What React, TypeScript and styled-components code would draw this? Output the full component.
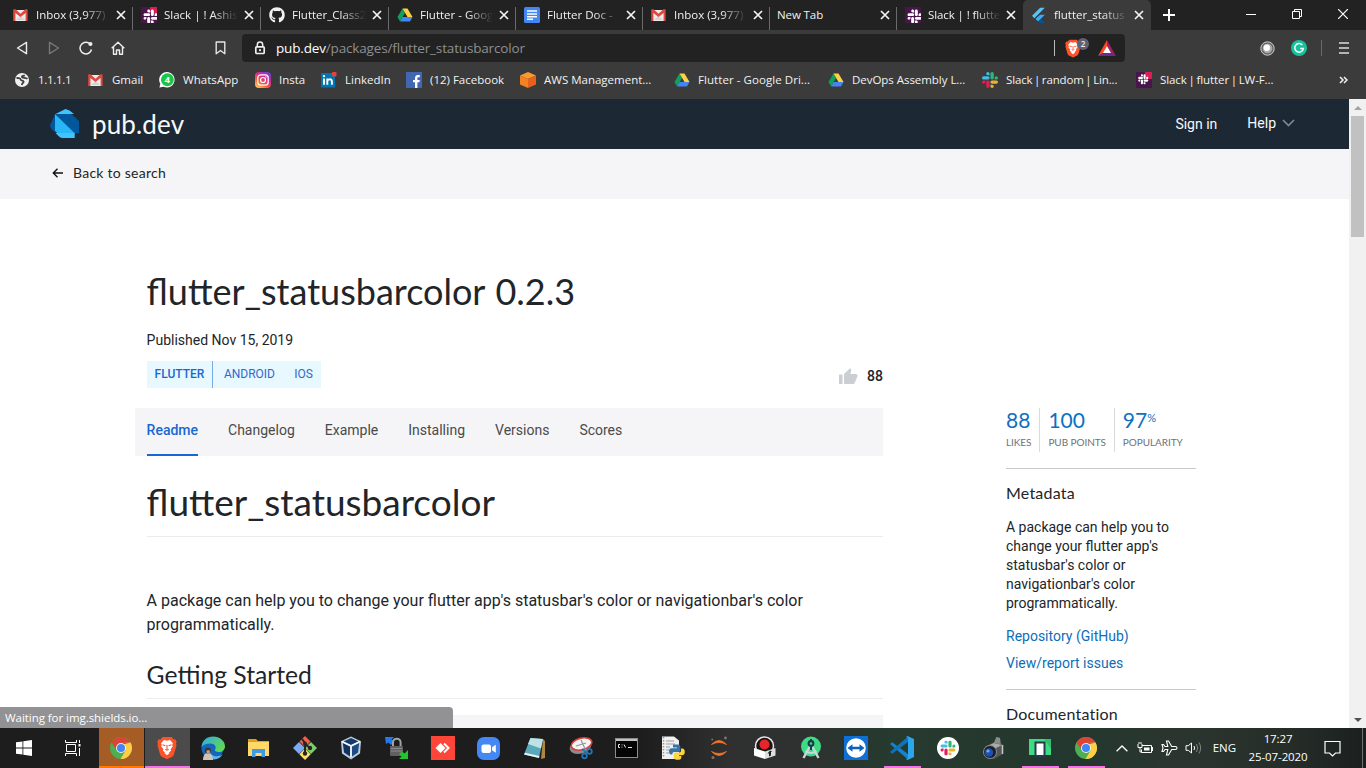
import React from 'react';
import styled, { createGlobalStyle } from 'styled-components';
import { FaGithub, FaSlack } from 'react-icons/fa';

const UI = "'Open Sans', 'Noto Sans', sans-serif";
const DISPLAY = "Lato, 'Open Sans', sans-serif";
const BODY = "Roboto, 'Liberation Sans', sans-serif";

const GlobalStyle = createGlobalStyle`
  * { box-sizing: border-box; }
  body { margin: 0; background: #fff; overflow: hidden; }
  svg { display: block; flex: none; }
`;

const Screen = styled.div`
  width: 1366px;
  height: 768px;
  display: flex;
  flex-direction: column;
  overflow: hidden;
  font-family: ${UI};
`;

/* ---------- browser frame ---------- */

const Browser = styled.header`
  height: 99px;
  flex: none;
  background: #3b3b3b;
  color: #f2f2f2;
  display: flex;
  flex-direction: column;
`;

const TabStrip = styled.div`
  height: 30px;
  background: #222;
  display: flex;
  padding-left: 5px;
`;

const TabItem = styled.div<{ $width?: number; $active?: boolean; $last?: boolean }>`
  width: ${p => p.$width ?? 127}px;
  height: 30px;
  flex: none;
  display: flex;
  align-items: center;
  padding: 0 7px 0 8px;
  border-radius: ${p => (p.$active ? '5px 5px 0 0' : '0')};
  background: ${p =>
    p.$active
      ? '#3b3b3b'
      : p.$last
        ? 'transparent'
        : 'linear-gradient(#6a6a6a, #6a6a6a) right bottom / 1px 23px no-repeat'};
`;

const TabIcon = styled.span`
  width: 16px;
  margin-right: 7px;
`;

const TabTitle = styled.span`
  flex: 1;
  height: 20px;
  line-height: 20px;
  font-size: 11.5px;
  white-space: nowrap;
  overflow: hidden;
  mask-image: linear-gradient(to right, #000 calc(100% - 26px), transparent);
`;

const SnugTabTitle = styled(TabTitle)`
  letter-spacing: -0.1px;
  margin-right: -1px;
`;

const PlainTabTitle = styled(TabTitle)`
  mask-image: none;
  margin-left: -1px;
  letter-spacing: -0.1px;
`;

const CloseSlot = styled.span`
  width: 10px;
  margin-left: 6px;
`;

const NewTabSlot = styled.div`
  width: 36px;
  display: grid;
  place-items: center;
`;

const WindowButtons = styled.div`
  display: flex;
  margin-left: auto;
`;

const WindowButton = styled.div`
  width: 46px;
  height: 28px;
  display: grid;
  place-items: center;
`;

const Toolbar = styled.div`
  height: 36px;
  display: flex;
  align-items: center;
  padding: 0 6px;
`;

const ToolButton = styled.div`
  width: 32px;
  height: 32px;
  flex: none;
  display: grid;
  place-items: center;
`;

const BookmarkButton = styled(ToolButton)`
  margin-left: 70px;
`;

const AddressBar = styled.div`
  width: 883px;
  height: 28px;
  flex: none;
  margin-left: 6px;
  border-radius: 4px;
  background: #222;
  display: flex;
  align-items: center;
  padding: 0 9px 0 12px;
`;

const Url = styled.div`
  flex: 1;
  padding-left: 10px;
  font-size: 13.5px;
  line-height: 20px;
  letter-spacing: -0.16px;
  color: #8f8f8f;
`;

const UrlHost = styled.span`
  color: #fff;
`;

const Separator = styled.span<{ $color: string }>`
  width: 1px;
  height: 16px;
  background: ${p => p.$color};
`;

const ShieldButton = styled.div`
  position: relative;
  margin-left: 10px;
  width: 17px;
`;

const ShieldCount = styled.span`
  position: absolute;
  left: 12px;
  top: -1px;
  width: 12px;
  height: 12px;
  border-radius: 6px;
  background: #5f6072;
  color: #eee;
  font-size: 8px;
  font-weight: 600;
  line-height: 12px;
  text-align: center;
`;

const RewardsSlot = styled.span`
  margin-left: 16px;
`;

const ExtensionRow = styled.div`
  display: flex;
  align-items: center;
  margin-left: 126px;
`;

const MenuGroup = styled.div`
  display: flex;
  align-items: center;
  gap: 17px;
  margin-left: 6px;
`;

const BookmarkBar = styled.nav`
  height: 28px;
  display: flex;
  align-items: center;
  padding-left: 14px;
`;

const BookmarkItem = styled.div<{ $width: number; $word?: number; $track?: number }>`
  width: ${p => p.$width}px;
  flex: none;
  display: flex;
  align-items: center;
  gap: 8px;
  font-size: 11.5px;
  line-height: 20px;
  white-space: nowrap;
  word-spacing: ${p => p.$word ?? 0}px;
  letter-spacing: ${p => p.$track ?? 0}px;
`;

const Overflow = styled.div`
  margin-left: auto;
  padding-right: 18px;
`;

/* ---------- web page ---------- */

const Viewport = styled.div`
  flex: 1;
  min-height: 0;
  display: flex;
  position: relative;
`;

const Site = styled.div`
  flex: 1;
  height: 629px;
  overflow: hidden;
  background: #fff;
  color: #212529;
  font-family: ${BODY};
`;

const SiteHeader = styled.div`
  height: 50px;
  background: #1c2834;
  color: #f8f9fa;
  display: flex;
  align-items: center;
  padding: 0 54px 0 50px;
  font-size: 14px;
`;

const Brand = styled.span`
  flex: 1;
  margin-left: 12px;
  font-family: ${DISPLAY};
  font-size: 26px;
  line-height: 32px;
  letter-spacing: 0.15px;
`;

const HelpLink = styled.span`
  display: flex;
  align-items: center;
  gap: 6px;
  margin: -2px 0 0 30px;
`;

const BackBar = styled.div`
  height: 50px;
  background: #f5f5f7;
  display: flex;
  align-items: center;
  gap: 9px;
  padding: 0 0 3px 52px;
  font-family: ${DISPLAY};
  font-size: 14px;
  letter-spacing: 0.25px;
`;

const Main = styled.main`
  display: flex;
  align-items: flex-start;
  padding: 69px 0 0 135px;
`;

const Content = styled.article`
  width: 748px;
`;

const PackageHead = styled.div`
  padding-left: 11.6px;
`;

const Title = styled.h1`
  margin: 0;
  padding-top: 1px;
  height: 44px;
  font-family: ${DISPLAY};
  font-weight: 400;
  font-size: 36px;
  line-height: 44px;
  word-spacing: 1.5px;
`;

const Published = styled.div`
  margin-top: 18px;
  font-size: 14px;
  line-height: 20px;
`;

const HeadRow = styled.div`
  display: flex;
  justify-content: space-between;
  align-items: flex-start;
  height: 58px;
  padding-top: 11px;
`;

const Tags = styled.div`
  display: flex;
  height: 27px;
  background: #e7f8ff;
  color: #3169c9;
  font-size: 12px;
  line-height: 26px;
`;

const TagMain = styled.span`
  width: 66px;
  padding-left: 8px;
  color: #1967d2;
  font-weight: 500;
  border-right: 1px solid #7ba9e6;
`;

const Tag = styled.span`
  padding: 0 8px 0 11.3px;
`;

const Likes = styled.div`
  display: flex;
  align-items: center;
  gap: 9px;
  padding-top: 5px;
  font-size: 14px;
  font-weight: 500;
  line-height: 21px;
`;

const PackageTabs = styled.div`
  height: 48px;
  background: #f5f5f7;
  display: flex;
  gap: 30px;
  padding-left: 11.6px;
`;

const PackageTab = styled.span<{ $active?: boolean }>`
  height: 48px;
  line-height: 44px;
  font-size: 14px;
  font-weight: ${p => (p.$active ? 500 : 400)};
  color: ${p => (p.$active ? '#1967d2' : '#4a4a4a')};
  border-bottom: 2px solid ${p => (p.$active ? '#1967d2' : 'transparent')};
`;

const Readme = styled.section`
  padding-left: 11.6px;
`;

const ReadmeTitle = styled.h1`
  margin: 0;
  height: 81px;
  padding-top: 23px;
  border-bottom: 1px solid #eaecef;
  font-family: ${DISPLAY};
  font-weight: 400;
  font-size: 37px;
  line-height: 46px;
`;

const Paragraph = styled.p`
  margin: 52px 0 0;
  font-size: 16px;
  line-height: 24px;
`;

const ReadmeSubtitle = styled.h2`
  margin: 23px 0 0;
  height: 39px;
  border-bottom: 1px solid #eaecef;
  font-family: ${DISPLAY};
  font-weight: 400;
  font-size: 24.7px;
  line-height: 30px;
`;

const CodeBlock = styled.pre`
  margin: 16px 0 0;
  height: 60px;
  background: #f5f5f7;
`;

const Sidebar = styled.aside`
  width: 190px;
  margin: 140px 0 0 123px;
  font-size: 14px;
  line-height: 19px;
`;

const Scores = styled.div`
  display: flex;
  height: 44px;
`;

const Score = styled.div`
  height: 44px;
  padding-right: 8px;
  margin-right: 8px;
  border-right: 1px solid #d8dadd;
  font-family: ${DISPLAY};
  white-space: nowrap;
  &:last-child {
    border: 0;
    margin: 0;
  }
`;

const ScoreValue = styled.div`
  display: flex;
  height: 26px;
  font-size: 21px;
  line-height: 24px;
  color: #0e70c0;
`;

const ScorePercent = styled.span`
  font-size: 11px;
  line-height: 20px;
`;

const ScoreLabel = styled.div`
  font-size: 10px;
  line-height: 17px;
  letter-spacing: -0.07px;
  color: #6d7278;
`;

const Divider = styled.div`
  height: 1px;
  margin-top: 16px;
  background: #c8c8ca;
`;

const SideTitle = styled.h3`
  margin: 0;
  padding-top: 14px;
  height: 35px;
  font-family: ${DISPLAY};
  font-weight: 400;
  font-size: 16px;
  line-height: 20px;
  letter-spacing: 0.2px;
`;

const SideText = styled.p`
  margin: 14px 0 0;
  width: 170px;
`;

const SideLink = styled.a`
  display: block;
  color: #0e6db8;
  margin-top: 8px;
  ${SideText} + & {
    margin-top: 14px;
  }
`;

const Scrollbar = styled.div`
  width: 17px;
  background: #f1f1f1;
  display: flex;
  flex-direction: column;
  align-items: center;
`;

const ScrollArrow = styled.div`
  height: 17px;
  width: 17px;
  display: grid;
  place-items: center;
`;

const ScrollThumb = styled.div`
  width: 13px;
  height: 121px;
  background: #c1c1c1;
  margin-bottom: auto;
`;

const StatusBubble = styled.div`
  position: absolute;
  left: 0;
  bottom: 0;
  width: 453px;
  height: 21px;
  padding-left: 5px;
  border-top-right-radius: 4px;
  background: #929294;
  color: #fff;
  font-size: 11.5px;
  line-height: 21px;
  letter-spacing: -0.05px;
`;

/* ---------- taskbar ---------- */

const Taskbar = styled.footer`
  height: 40px;
  flex: none;
  display: flex;
  color: #fff;
  background: linear-gradient(to right, #1d1d1d 0, #1d1d1d 640px, #303030 730px, #2f3030 800px, #263a2f 890px, #24372e 1090px, #2b352f 1180px, #262d29 1290px, #1b201e 1366px);
`;

const TaskButton = styled.div<{ $width?: number; $fill?: string; $line?: string }>`
  width: ${p => p.$width ?? 45.95}px;
  height: 40px;
  flex: none;
  display: grid;
  place-items: center;
  border-right: 1px solid transparent;
  background: ${p => p.$fill ?? 'transparent'};
  background-clip: padding-box;
  box-shadow: ${p => (p.$fill && p.$line ? `inset 0 -2px ${p.$line}` : 'none')};
`;

const RunningButton = styled(TaskButton)`
  background: linear-gradient(#f472e4, #f472e4) center bottom / 37px 2px no-repeat;
`;

const Tray = styled.div`
  flex: 1;
  display: flex;
  align-items: center;
  font-size: 11.5px;
`;

const TrayIcon = styled.span`
  width: 24px;
  display: grid;
  place-items: center;
`;

const Language = styled.span`
  margin-left: 7px;
  line-height: 16px;
  padding-bottom: 1px;
`;

const Clock = styled.div`
  width: 62px;
  margin-left: 11px;
  text-align: center;
  line-height: 18px;
  letter-spacing: -0.1px;
  padding-bottom: 1px;
`;

const NoticeSlot = styled.span`
  margin-left: 15px;
`;

const DesktopEdge = styled.span`
  margin-left: 20px;
  width: 1px;
  height: 40px;
  background: #6f7472;
`;

/* ---------- small drawings ---------- */

const Close = () => (
  <svg width="10" height="10" viewBox="0 0 10 10"><path d="M1 1l8 8M9 1l-8 8" stroke="#f4f4f4" strokeWidth="1.7" /></svg>
);

const GmailIcon = () => (
  <svg width="16" height="16" viewBox="0 0 16 16">
    <path d="M1 3h13v11H1z" fill="#eceaea" />
    <path d="M3 13l4.5-4L12 13" fill="#d4d2d2" />
    <path d="M.8 2.300h1.700l5 4.400 5-4.400H14c.4 0 .6.4.6.8V14h-2V6L7.500 10 2.400 6v8H.2V3c0-.4.2-.7.6-.7z" fill="#dc4a3f" />
  </svg>
);

const SlackDark = ({ alert }: { alert?: boolean }) => (
  <svg width="16" height="16" viewBox="0 0 16 16">
    <path d="M0 0h16v16H0z" fill="#4a154b" />
    {alert && <path d="M9 0h7v7h-4.500L9 4.500z" fill="#d91d57" />}
    <FaSlack x="1.5" y="1.5" width="13" height="13" color="#fff" />
  </svg>
);

const SlackColor = () => (
  <svg width="16" height="16" viewBox="0 0 24 24">
    <path fill="#e01e5a" d="M5.042 15.165a2.528 2.528 0 0 1-2.520 2.523A2.528 2.528 0 0 1 0 15.165a2.527 2.527 0 0 1 2.522-2.520h2.520v2.520zM6.313 15.165a2.527 2.527 0 0 1 2.521-2.520 2.527 2.527 0 0 1 2.521 2.520v6.313A2.528 2.528 0 0 1 8.834 24a2.528 2.528 0 0 1-2.521-2.522v-6.313z" />
    <path fill="#3fbfe8" d="M8.834 5.042a2.528 2.528 0 0 1-2.521-2.520A2.528 2.528 0 0 1 8.834 0a2.528 2.528 0 0 1 2.521 2.522v2.520H8.834zM8.834 6.313a2.528 2.528 0 0 1 2.521 2.521 2.528 2.528 0 0 1-2.521 2.521H2.522A2.528 2.528 0 0 1 0 8.834a2.528 2.528 0 0 1 2.522-2.521h6.312z" />
    <path fill="#2fb67c" d="M18.956 8.834a2.528 2.528 0 0 1 2.522-2.521A2.528 2.528 0 0 1 24 8.834a2.528 2.528 0 0 1-2.522 2.521h-2.522V8.834zM17.688 8.834a2.528 2.528 0 0 1-2.523 2.521 2.527 2.527 0 0 1-2.520-2.521V2.522A2.527 2.527 0 0 1 15.165 0a2.528 2.528 0 0 1 2.523 2.522v6.312z" />
    <path fill="#ecb22e" d="M15.165 18.956a2.528 2.528 0 0 1 2.523 2.522A2.528 2.528 0 0 1 15.165 24a2.527 2.527 0 0 1-2.520-2.522v-2.522h2.520zM15.165 17.688a2.527 2.527 0 0 1-2.520-2.523 2.526 2.526 0 0 1 2.520-2.520h6.313A2.527 2.527 0 0 1 24 15.165a2.528 2.528 0 0 1-2.522 2.523h-6.313z" />
  </svg>
);

const DriveIcon = () => (
  <svg width="16" height="16" viewBox="0 0 16 16">
    <path d="M5.500 1.500L8 6 3.100 14.500 .5 10z" fill="#11a05c" />
    <path d="M5.500 1.500h5l5 8.500h-5z" fill="#ffcf44" />
    <path d="M5.600 10h9.900L13 14.500H3.100z" fill="#4485f4" />
  </svg>
);

const DocsIcon = () => (
  <svg width="16" height="16" viewBox="0 0 16 16">
    <rect width="16" height="16" rx="1.5" fill="#4387f5" />
    <path d="M3 4h10M3 7h10M3 9.800h10M3 12.300h6" stroke="#fff" strokeWidth="1.6" />
  </svg>
);

const FlutterIcon = () => (
  <svg width="15" height="17" viewBox="0 0 15 17">
    <path d="M9.200.8h4.600L3.400 11.200 1 8.800z" fill="#54c5f8" />
    <path d="M9.200 7.800h4.600l-4.100 4.100L7.300 14.200 4.700 12z" fill="#42a5f5" />
    <path d="M4.800 12l2.400-2.400 2.400 2.400-2.400 2.300z" fill="#29b6f6" />
    <path d="M7.200 14.300l2.400-2.400 4.200 4.200H9.200z" fill="#01579b" />
  </svg>
);

const GlobeIcon = () => (
  <svg width="16" height="16" viewBox="0 0 16 16">
    <circle cx="8" cy="8" r="7" fill="#f0f0f0" />
    <path d="M2.500 6.200c2-.6 4 .2 4.200 1.400.3 1.400 2.900.6 3 2.200 0 1-1.500 1.300-2 3.200M10.800 3.200c-1.300 1-2.800.2-2.900 1.500-.1 1.500 3.800.8 5.600 2.100" fill="none" stroke="#3b3b3b" strokeWidth="1.8" />
  </svg>
);

const WhatsAppIcon = () => (
  <svg width="16" height="16" viewBox="0 0 16.600 16">
    <path d="M.4 15.800l1-3.800A8 8 0 1 1 4.800 15z" fill="#fff" />
    <circle cx="8.700" cy="7.800" r="6.700" fill="#18c64a" />
    <text x="8.700" y="11.600" fontSize="10" fontWeight="700" textAnchor="middle" fill="#fff">4</text>
  </svg>
);

const InstaIcon = () => (
  <svg width="16" height="16" viewBox="0 0 16 16">
    <defs>
      <linearGradient id="insta" x1="0.1" y1="1" x2="0.8" y2="0">
        <stop offset="0" stopColor="#ffd65c" /><stop offset=".35" stopColor="#f7603a" /><stop offset=".65" stopColor="#d52c8c" /><stop offset="1" stopColor="#6a45d5" />
      </linearGradient>
    </defs>
    <rect width="16" height="16" rx="4" fill="url(#insta)" />
    <g fill="none" stroke="#fff" strokeWidth="1.2"><rect x="2.800" y="2.800" width="10.400" height="10.400" rx="3" /><circle cx="8" cy="8" r="2.500" /></g>
    <circle cx="11" cy="5" r=".7" fill="#fff" />
  </svg>
);

const LinkedInIcon = () => (
  <svg width="16" height="16" viewBox="0 0 16 16">
    <rect y="1" width="14" height="14.500" fill="#0077b5" />
    <path d="M3 6.500v6.300M6.300 6.500v6.300M6.300 9.500c0-2.600 4.600-3.200 4.600 0v3.300" fill="none" stroke="#fff" strokeWidth="1.9" />
    <circle cx="3" cy="4.200" r="1.100" fill="#fff" />
    <rect x="11" width="4.500" height="4.500" rx="1" fill="#ea4335" />
  </svg>
);

const FacebookIcon = () => (
  <svg width="16" height="16" viewBox="0 0 16 16">
    <rect width="16" height="16" fill="#4267b2" />
    <path d="M9 16v-5.800H7V8h2V6.200C9 4 10.300 3 12 3h1.800v2.200h-1.300c-.9 0-1.100.5-1.100 1.200V8h2.400l-.4 2.200h-2V16z" fill="#fff" />
  </svg>
);

const AwsIcon = () => (
  <svg width="16" height="16" viewBox="0 0 16 16">
    <path d="M8 0l8 3.600L8 7 0 3.600z" fill="#fa9a2f" />
    <path d="M0 3.600L8 7v9l-8-3.400z" fill="#f58220" />
    <path d="M16 3.600L8 7v9l8-3.400z" fill="#e8611c" />
  </svg>
);

const BraveLion = ({ width, height }: { width: number; height: number }) => (
  <svg width={width} height={height} viewBox="0 0 20 23">
    <path d="M5.400.6h9.200l2 2.300 1.700-.2 1.400 2.500-.7 2 .5 1.900-2.600 9c-.3 1-1 1.700-1.700 2.200L10 22.800l-5.200-2.500c-.8-.5-1.400-1.300-1.700-2.200l-2.600-9L1 7.200.3 5.200l1.400-2.500 1.700.2z" fill="#fb542b" />
    <path d="M10 4.200l3-.7 2.900 3.300-.7 1.800.5 1.400-2 2.500.3 1.700-2 1.700-2 1.400-2-1.400-2-1.700.3-1.700-2-2.500.5-1.400-.7-1.800L7 3.500z" fill="#fff" />
    <path d="M5.500 8.300l3 .9M14.500 8.300l-3 .9M10 8.500v4M8.300 12.700l1.700.9 1.700-.9" fill="none" stroke="#fb542b" strokeWidth="1.1" />
    <path d="M7.300 16.500L10 15.200l2.700 1.300L10 18.700z" fill="#fff" />
  </svg>
);

const RewardsIcon = () => (
  <svg width="18" height="16" viewBox="0 0 18 16">
    <path d="M9 0L0 16l5.500-3L9 7z" fill="#ff4724" />
    <path d="M9 0l9 16-5.500-3L9 7z" fill="#9e1f63" />
    <path d="M0 16h18l-5.500-3.400h-7z" fill="#662d91" />
    <path d="M9 6l4 7H5z" fill="#fff" />
  </svg>
);

const DartIcon = () => (
  <svg width="30" height="30" viewBox="0 0 30 30">
    <path d="M5.500 5L15.500 0l4 1.500L24 5z" fill="#40c4ff" />
    <path d="M5 5h16.500l7.500 7v12h-5z" fill="#01579b" />
    <path d="M5 5L0 16.500c0 1.500 1 3 2 4l3 3z" fill="#01579b" />
    <path d="M5 5l19.500 19v5H12.500L5 22z" fill="#29b6f6" />
    <path d="M5.500 24h19v5H12.500c-1.500 0-3-1-4-2z" fill="#40c4ff" />
  </svg>
);

const Thumb = () => (
  <svg width="19" height="17" viewBox="0 0 19 17">
    <path d="M0 6.500h3.500V16H0z M5 15V6.800c0-.5.200-.9.500-1.200L11 .2l.9.9c.3.300.4.700.3 1.100L11.400 6h5.500c1 0 1.600.8 1.600 1.600 0 .3 0 .5-.1.800l-2.600 6.300c-.3.800-1 1.300-1.800 1.300H6.500C5.700 16 5 15.600 5 15z" fill="#cbced3" />
  </svg>
);

const ChromeIcon = () => (
  <svg width="24" height="24" viewBox="0 0 24 24">
    <circle cx="12" cy="12" r="11" fill="#4caf50" />
    <path d="M2.500 6.500A11 11 0 0 1 21.500 6.500L12 7 8 14.500z" fill="#db4437" />
    <path d="M21.500 6.500A11 11 0 0 1 11.500 23l5-8.500L12 7z" fill="#ffce44" />
    <path d="M21.500 6.500H12V9z" fill="#db4437" />
    <circle cx="12" cy="12" r="5" fill="#f1f1f1" /><circle cx="12" cy="12" r="4" fill="#4285f4" />
  </svg>
);

const EdgeIcon = () => (
  <svg width="24" height="24" viewBox="0 0 24 24">
    <defs>
      <linearGradient id="edgeTop" x1="0" y1="0" x2="1" y2=".5"><stop offset="0" stopColor="#2ea8e6" /><stop offset="1" stopColor="#5fd75b" /></linearGradient>
    </defs>
    <circle cx="11.500" cy="12" r="11" fill="#1565b8" />
    <path d="M.5 11C1 4.500 6 .5 12 .5 19 .5 24 5 24 10.500c0 3.500-3 5.500-6 5.500-3 0-4.500-1.200-4-2.200 2-3-.5-6.300-4.500-6.300C5 7.500 2 9 .5 11z" fill="url(#edgeTop)" />
    <path d="M9 12.500c-1.500 5 3 8.500 8 7.500 2 0 3.500-1 4.500-2-2 5-8.500 7-13.500 4z" fill="#59b6ee" />
    <path d="M2 24c0-4.500 2-7 4.700-7S12 19.500 12 24z" fill="#cfc3b6" />
    <circle cx="6.800" cy="14.500" r="3" fill="#3d3531" /><circle cx="7.200" cy="15.800" r="1.800" fill="#c59c83" />
  </svg>
);

const FolderIcon = () => (
  <svg width="24" height="22" viewBox="0 0 24 22">
    <path d="M1 2h8l2 2h11v5H1z" fill="#e0a01c" /><path d="M1 5h21v14H1z" fill="#ffd867" />
    <path d="M5 20v-8h13v8h-3.500v-4h-6v4z" fill="#3f9bdd" />
  </svg>
);

const GitIcon = () => (
  <svg width="24" height="24" viewBox="0 0 24 24">
    <path d="M12 0l5.500 5.500L12 11 6.500 5.500z" fill="#f0614c" /><path d="M18 6l6 6-6 6-6-6z" fill="#79cf6a" />
    <path d="M6 6l6 6-6 6-6-6z" fill="#7ea9f3" /><path d="M12 12.500l5.700 5.700L12 24l-5.700-5.800z" fill="#fbe16c" />
    <path d="M9 3l3 4v11M12 8l5 4" stroke="#2b2320" strokeWidth="2" fill="none" />
    <g fill="#2b2320"><circle cx="12" cy="7.500" r="2" /><circle cx="17" cy="12" r="2.200" /><circle cx="12" cy="17.500" r="2.200" /></g>
  </svg>
);

const BoxIcon = () => (
  <svg width="22" height="24" viewBox="0 0 22 24">
    <path d="M11 .5l10 4.800-1 12.200-6 4-3 2-3-2-6-4L1 5.300z" fill="#b9cfe0" />
    <path d="M11 2l7.500 3.600L11 9 3.500 5.600z" fill="#163a68" /><path d="M2.800 7L10 10.500v10L4 16.500z" fill="#12315c" /><path d="M19.200 7L12 10.500v10l6-4z" fill="#1e4b82" />
    <path d="M2 5.500L11 10l9-4.500M11 10v11" stroke="#f2f8fc" strokeWidth="1.400" fill="none" />
  </svg>
);

const LockArrows = () => (
  <svg width="24" height="24" viewBox="0 0 24 24">
    <path d="M0 1h9L6.500 3.500 9 6 6 9 3.500 6.500 1 8z" fill="#1f7bf2" />
    <path d="M8 11V6.500a3.800 3.800 0 0 1 7.600 0V11" fill="none" stroke="#a3a3a3" strokeWidth="2" />
    <rect x="5" y="10" width="13" height="10" rx="1" fill="#606060" /><path d="M6 12.500h11M6 15h11" stroke="#8b8b8b" />
    <path d="M23 14v9h-9l2.500-2.500L14 18l3-2.500 2.500 2z" fill="#22c32e" />
  </svg>
);

const AnyDeskIcon = () => (
  <svg width="24" height="24" viewBox="0 0 24 24">
    <path d="M0 0h24v24H0z" fill="#ff4438" /><path d="M9.500 7l5 5-5 5-5-5z" fill="#fff" /><path d="M13 7.500l4.500 4.500-4.500 4.500" fill="none" stroke="#fff" strokeWidth="2" />
  </svg>
);

const ZoomIcon = () => (
  <svg width="23" height="23" viewBox="0 0 23 23">
    <rect width="23" height="23" rx="7" fill="#4388f5" /><rect x="4.500" y="7.500" width="9.500" height="8.500" rx="2" fill="#fff" /><path d="M15 10.300l3.800-2.500v8L15 13.300z" fill="#fff" />
  </svg>
);

const NotepadIcon = () => (
  <svg width="24" height="24" viewBox="0 0 24 24">
    <path d="M20 3l2 2v17l-4 1z" fill="#b08640" />
    <path d="M7.500 2L20 3l-4 19-15-3.500z" fill="#5aa9ba" /><path d="M7.500 2L20 3l-2 9.500L5 8z" fill="#bfe2e6" /><path d="M1 18.500L16 22l.4-2L2 16.800z" fill="#e8f3f3" />
  </svg>
);

const SnipIcon = () => (
  <svg width="24" height="24" viewBox="0 0 24 24">
    <ellipse cx="11.500" cy="11" rx="11" ry="6.500" transform="rotate(-15 11.500 11)" fill="#8a8d90" />
    <ellipse cx="12.500" cy="8" rx="10.500" ry="5.800" transform="rotate(-14 12.500 8)" fill="#f4f4f4" stroke="#d9403a" strokeWidth="1.600" />
    <path d="M12 4l5 11M7 10l10-3" stroke="#8b979f" strokeWidth="1.200" />
    <g fill="none" stroke="#2377b8" strokeWidth="1.700"><circle cx="15.500" cy="20" r="2.300" /><circle cx="20.500" cy="15.500" r="2.300" /><path d="M13 13l5 4" /></g>
  </svg>
);

const TerminalIcon = () => (
  <svg width="23" height="20" viewBox="0 0 23 20">
    <rect x=".5" y=".5" width="22" height="19" fill="#050505" stroke="#8d8d8d" /><path d="M1 1h21v2H1z" fill="#c2c2c2" />
    <path d="M5 6.500H3.500v3H5M7 6.500v.8M7 8.700v.8M9 6.500l1.500 3M13 9.500h4" stroke="#e8e8e8" fill="none" />
  </svg>
);

const PythonFile = () => (
  <svg width="24" height="24" viewBox="0 0 24 24">
    <path d="M1 .5h12l5 4V23H1z" fill="#f0f0f0" /><path d="M2.500 1v21" stroke="#999" strokeWidth="1.500" strokeDasharray="1.500 1.500" />
    <path d="M5 5h8M5 8h9M5 11h4M5 14h3M5 17h3" stroke="#9d9d9d" />
    <path d="M12 8.500h5c1.500 0 2.300 1 2.300 2.300V14c0 1.500-1 2-2 2h-4c-1.300 0-2 1-2 2.500H10c-1.500 0-2-1.500-2-3 0-2 .8-3.200 2.500-3.200h5.500v-.8h-4z" fill="#3675a8" />
    <path d="M20 12.500h1.200c1.800 0 2.600 1.500 2.600 3.500s-1 3.200-2.500 3.200h-5v.8h4v1.500c0 1.500-1.200 2.300-3.500 2.300s-4-.8-4-2.300v-3c0-1.200.8-2 2-2h3.200c1.500 0 2-1 2-2z" fill="#ffd43b" />
  </svg>
);

const JupyterIcon = () => (
  <svg width="20" height="24" viewBox="0 0 20 24">
    <path d="M2.500 8.500Q10 .5 17.500 8.500 10 4.500 2.500 8.500zM2.500 15.500Q10 23.500 17.500 15.500 10 19.500 2.500 15.500z" fill="#f37726" stroke="#f37726" strokeWidth=".7" />
    <g fill="#767677"><circle cx="16.500" cy="2" r="1.400" /><circle cx="3.200" cy="3.500" r=".9" /><circle cx="4" cy="21.500" r="1.500" /></g>
  </svg>
);

const RecorderIcon = () => (
  <svg width="24" height="24" viewBox="0 0 24 24">
    <circle cx="11.500" cy="10" r="9" fill="#171717" stroke="#e6e6e6" strokeWidth="1.500" /><circle cx="11.500" cy="8.500" r="5" fill="#e5262b" />
    <path d="M1 12l11 3.500V23L1 19.500z" fill="#fff" /><path d="M12 15.500L22.500 12v7.500L12 23z" fill="#dedede" /><path d="M16 20.500v-3h-1.500l2.500-3 2.500 1.500h-1.500v3.500z" fill="#222" />
  </svg>
);

const AndroidStudioIcon = () => (
  <svg width="22" height="24" viewBox="0 0 22 24">
    <circle cx="11" cy="10.500" r="10" fill="#3ddc84" />
    <path d="M10 10L3.500 22M12 10l6.500 12" stroke="#c9d6dd" strokeWidth="2.400" /><path d="M5.500 15q5.500 4 11 0" fill="none" stroke="#c9d6dd" strokeWidth="1.800" />
    <circle cx="11" cy="7.500" r="3.400" fill="#1b3a4b" /><circle cx="11" cy="7.500" r="1.300" fill="#3ddc84" /><path d="M11 3v2M11 10v4" stroke="#1b3a4b" strokeWidth="2" />
  </svg>
);

const TeamViewerIcon = () => (
  <svg width="24" height="24" viewBox="0 0 24 24">
    <path d="M0 0h24v24H0z" fill="#0e6fd6" /><circle cx="12" cy="12" r="9.800" fill="#fff" />
    <path d="M3.500 12l5-3.800v2.500h7V8.200l5 3.800-5 3.800v-2.500h-7v2.500z" fill="#0e5fc0" />
  </svg>
);

const CodeIcon = () => (
  <svg width="24" height="24" viewBox="0 0 24 24">
    <path d="M0 8l2.200-1.800L18 18v5.500z" fill="#1584cc" /><path d="M0 16l2.200 1.800L18 6V.5z" fill="#0f74b8" /><path d="M17.500 0L24 3v18l-6.500 3-1.500-1 2-1V2l-2-1z" fill="#2aa6ef" />
  </svg>
);

const SlackRound = () => (
  <svg width="22" height="22" viewBox="0 0 22 22">
    <circle cx="11" cy="11" r="11" fill="#fff" />
    <g transform="translate(3.400 3.400) scale(.95)"><SlackColor /></g>
  </svg>
);

const CameraIcon = () => (
  <svg width="24" height="24" viewBox="0 0 24 24">
    <path d="M3 11L12 6l2-5 4 1 1 5 2 2v9l-9 5-7-1z" fill="#55585a" />
    <path d="M3 11l9-4 8 2-8 4z" fill="#a9acad" /><path d="M12 7l2.500-6 3.500 1 .5 6z" fill="#8a8d8e" /><path d="M20.500 9v9" stroke="#c5c7c7" strokeWidth="1.500" />
    <circle cx="8" cy="16" r="6.500" fill="#1d1e1f" stroke="#8b8d8e" /><circle cx="7" cy="16.500" r="4.200" fill="#1c50b8" /><circle cx="6" cy="15" r="1.600" fill="#75a9f1" />
  </svg>
);

const EmulatorIcon = () => (
  <svg width="22" height="18" viewBox="0 0 22 18">
    <path d="M0 0h22v16H0z" fill="#3ddc84" /><path d="M15 0h7v10z" fill="#32bd70" />
    <rect x="6.500" y="3.500" width="9" height="13.500" fill="#fff" stroke="#253b4b" strokeWidth="2" />
  </svg>
);

const tabs = [
  { title: 'Inbox (3,977)', icon: <GmailIcon />, width: 128 },
  { title: 'Slack | ! Ashis', icon: <SlackDark alert />, width: 128 },
  { title: 'Flutter_Class2', icon: <FaGithub size={16} />, width: 128 },
  { title: 'Flutter - Goog', icon: <DriveIcon />, width: 127 },
  { title: 'Flutter Doc -', icon: <DocsIcon />, width: 127 },
  { title: 'Inbox (3,977)', icon: <GmailIcon />, width: 127 },
];

const bookmarks = [
  { label: '1.1.1.1', icon: <GlobeIcon />, width: 74, track: -0.3 },
  { label: 'Gmail', icon: <GmailIcon />, width: 71 },
  { label: 'WhatsApp', icon: <WhatsAppIcon />, width: 96, track: 0.05 },
  { label: 'Insta', icon: <InstaIcon />, width: 66 },
  { label: 'LinkedIn', icon: <LinkedInIcon />, width: 85 },
  { label: '(12) Facebook', icon: <FacebookIcon />, width: 114 },
  { label: 'AWS Management...', icon: <AwsIcon />, width: 154 },
  { label: 'Flutter - Google Dri...', icon: <DriveIcon />, width: 154, track: 0.06 },
  { label: 'DevOps Assembly L...', icon: <DriveIcon />, width: 154, track: -0.04 },
  { label: 'Slack | random | Lin...', icon: <SlackColor />, width: 154, word: -1.2, track: -0.15 },
  { label: 'Slack | flutter | LW-F...', icon: <SlackDark alert />, width: 154, word: -1.2, track: -0.08 },
];

const apps = [
  EdgeIcon, FolderIcon, GitIcon, BoxIcon, LockArrows, AnyDeskIcon, ZoomIcon, NotepadIcon,
  SnipIcon, TerminalIcon, PythonFile, JupyterIcon, RecorderIcon, AndroidStudioIcon, TeamViewerIcon,
];

export default function App() {
  return (
    <Screen>
      <GlobalStyle />
      <Browser>
        <TabStrip>
          {tabs.map((t, i) => (
            <TabItem key={i} $width={t.width}>
              <TabIcon>{t.icon}</TabIcon>
              <TabTitle>{t.title}</TabTitle>
              <CloseSlot><Close /></CloseSlot>
            </TabItem>
          ))}
          <TabItem>
            <PlainTabTitle>New Tab</PlainTabTitle>
            <CloseSlot><Close /></CloseSlot>
          </TabItem>
          <TabItem $last $width={126}>
            <TabIcon><SlackDark /></TabIcon>
            <SnugTabTitle>Slack | ! flutte</SnugTabTitle>
            <CloseSlot><Close /></CloseSlot>
          </TabItem>
          <TabItem $active $width={128}>
            <TabIcon><FlutterIcon /></TabIcon>
            <TabTitle>flutter_status</TabTitle>
            <CloseSlot><Close /></CloseSlot>
          </TabItem>
          <NewTabSlot>
            <svg width="12" height="12" viewBox="0 0 12 12"><path d="M6 0v12M0 6h12" stroke="#fff" strokeWidth="2" /></svg>
          </NewTabSlot>
          <WindowButtons>
            <WindowButton><svg width="10" height="10"><path d="M0 5.500h10" stroke="#fff" /></svg></WindowButton>
            <WindowButton>
              <svg width="10" height="10" fill="none" stroke="#fff"><path d="M.5 2.500h7v7h-7zM2.500 2.500v-2h7v7h-2" /></svg>
            </WindowButton>
            <WindowButton><svg width="10" height="10"><path d="M0 0l10 10M10 0L0 10" stroke="#fff" strokeWidth="1.200" /></svg></WindowButton>
          </WindowButtons>
        </TabStrip>
        <Toolbar>
          <ToolButton><svg width="12" height="14" viewBox="0 0 12 14"><path d="M10.500 1.300v11.400L1.500 7z" fill="none" stroke="#eee" strokeWidth="1.400" strokeLinejoin="round" /></svg></ToolButton>
          <ToolButton><svg width="12" height="14" viewBox="0 0 12 14"><path d="M1.500 1.300v11.400l9-5.700z" fill="none" stroke="#777" strokeWidth="1.400" strokeLinejoin="round" /></svg></ToolButton>
          <ToolButton>
            <svg width="14" height="14" viewBox="0 0 14 14"><path d="M12.500 8.500A5.800 5.800 0 1 1 10 2.200" fill="none" stroke="#eee" strokeWidth="1.500" /><circle cx="11.400" cy="3" r="2.100" fill="#eee" /></svg>
          </ToolButton>
          <ToolButton>
            <svg width="14" height="14" viewBox="0 0 14 14"><path d="M.7 7.200L7 1.200l6.300 6M2.500 6v7.200h3V9h3v4.200h3V6" fill="none" stroke="#eee" strokeWidth="1.400" strokeLinejoin="round" /></svg>
          </ToolButton>
          <BookmarkButton>
            <svg width="11" height="14" viewBox="0 0 11 14"><path d="M1.200 1h8.600v11.800L5.500 9.500l-4.300 3.300z" fill="none" stroke="#e4e4e4" strokeWidth="1.400" strokeLinejoin="round" /></svg>
          </BookmarkButton>
          <AddressBar>
            <svg width="12" height="14" viewBox="0 0 12 14"><rect x="1.800" y="5.800" width="8.400" height="6.700" rx="1" fill="none" stroke="#eee" strokeWidth="1.700" /><path d="M3.300 6V3.800a2.700 2.700 0 0 1 5.400 0V6" fill="none" stroke="#eee" strokeWidth="1.500" /><circle cx="6" cy="9.200" r="1.100" fill="#eee" /></svg>
            <Url><UrlHost>pub.dev</UrlHost>/packages/flutter_statusbarcolor</Url>
            <Separator $color="#bbb" />
            <ShieldButton>
              <BraveLion width={16} height={19} />
              <ShieldCount>2</ShieldCount>
            </ShieldButton>
            <RewardsSlot><RewardsIcon /></RewardsSlot>
          </AddressBar>
          <ExtensionRow>
            <ToolButton>
              <svg width="15" height="15" viewBox="0 0 15 15"><circle cx="7.500" cy="7.500" r="6.700" fill="#666" stroke="#ccc" /><circle cx="7.500" cy="7.500" r="4.800" fill="#aaa" /><circle cx="6.800" cy="6.800" r="3.200" fill="#fff" /></svg>
            </ToolButton>
            <ToolButton>
              <svg width="16" height="16" viewBox="0 0 16 16"><circle cx="8" cy="8" r="8" fill="#15c39a" /><path d="M11.300 5A4.300 4.300 0 1 0 12.300 8.600H9.200" fill="none" stroke="#fff" strokeWidth="1.500" /></svg>
            </ToolButton>
            <MenuGroup>
              <Separator $color="#6a6a6a" />
              <svg width="10" height="12" viewBox="0 0 10 12"><path d="M0 1h10M0 6h10M0 11h10" stroke="#ddd" strokeWidth="1.700" /></svg>
            </MenuGroup>
          </ExtensionRow>
        </Toolbar>
        <BookmarkBar>
          {bookmarks.map(b => (
            <BookmarkItem key={b.label} $width={b.width} $word={b.word} $track={b.track}>
              {b.icon}
              {b.label}
            </BookmarkItem>
          ))}
          <Overflow>
            <svg width="9" height="8" viewBox="0 0 9 8"><path d="M1 1l3 3-3 3M5 1l3 3-3 3" fill="none" stroke="#f2f2f2" strokeWidth="1.500" /></svg>
          </Overflow>
        </BookmarkBar>
      </Browser>

      <Viewport>
        <Site>
          <SiteHeader>
            <DartIcon />
            <Brand>pub.dev</Brand>
            <span>Sign in</span>
            <HelpLink>
              Help
              <svg width="13" height="8" viewBox="0 0 13 8"><path d="M1 1l5.500 5.500L12 1" fill="none" stroke="#7f868d" strokeWidth="1.700" /></svg>
            </HelpLink>
          </SiteHeader>
          <BackBar>
            <svg width="12" height="10" viewBox="0 0 12 10"><path d="M11 5H1.500M5.500 .8L1.300 5l4.200 4.200" fill="none" stroke="#111" strokeWidth="1.400" /></svg>
            Back to search
          </BackBar>
          <Main>
            <Content>
              <PackageHead>
                <Title>flutter_statusbarcolor 0.2.3</Title>
                <Published>Published Nov 15, 2019</Published>
                <HeadRow>
                  <Tags>
                    <TagMain>FLUTTER</TagMain>
                    <Tag>ANDROID</Tag>
                    <Tag>IOS</Tag>
                  </Tags>
                  <Likes><Thumb />88</Likes>
                </HeadRow>
              </PackageHead>
              <PackageTabs>
                <PackageTab $active>Readme</PackageTab>
                <PackageTab>Changelog</PackageTab>
                <PackageTab>Example</PackageTab>
                <PackageTab>Installing</PackageTab>
                <PackageTab>Versions</PackageTab>
                <PackageTab>Scores</PackageTab>
              </PackageTabs>
              <Readme>
                <ReadmeTitle>flutter_statusbarcolor</ReadmeTitle>
                <Paragraph>
                  A package can help you to change your flutter app's statusbar's color or navigationbar's color programmatically.
                </Paragraph>
                <ReadmeSubtitle>Getting Started</ReadmeSubtitle>
                <CodeBlock />
              </Readme>
            </Content>
            <Sidebar>
              <Scores>
                <Score><ScoreValue>88</ScoreValue><ScoreLabel>LIKES</ScoreLabel></Score>
                <Score><ScoreValue>100</ScoreValue><ScoreLabel>PUB POINTS</ScoreLabel></Score>
                <Score><ScoreValue>97<ScorePercent>%</ScorePercent></ScoreValue><ScoreLabel>POPULARITY</ScoreLabel></Score>
              </Scores>
              <Divider />
              <SideTitle>Metadata</SideTitle>
              <SideText>A package can help you to change your flutter app's statusbar's color or navigationbar's color programmatically.</SideText>
              <SideLink>Repository (GitHub)</SideLink>
              <SideLink>View/report issues</SideLink>
              <Divider />
              <SideTitle>Documentation</SideTitle>
            </Sidebar>
          </Main>
        </Site>
        <Scrollbar>
          <ScrollArrow><svg width="8" height="4"><path d="M0 4l4-4 4 4z" fill="#a3a3a3" /></svg></ScrollArrow>
          <ScrollThumb />
          <ScrollArrow><svg width="8" height="4"><path d="M0 0l4 4 4-4z" fill="#505050" /></svg></ScrollArrow>
        </Scrollbar>
        <StatusBubble>Waiting for img.shields.io...</StatusBubble>
      </Viewport>

      <Taskbar>
        <TaskButton $width={49}>
          <svg width="16" height="16" viewBox="0 0 16 16"><path d="M0 2.300l6.500-.9v6.200H0zM7.300 1.300L16 0v7.600H7.300zM0 8.400h6.500v6.200L0 13.700zM7.300 8.400H16V16l-8.700-1.300z" fill="#fff" /></svg>
        </TaskButton>
        <TaskButton $width={50}>
          <svg width="17" height="16" viewBox="0 0 17 16" fill="none" stroke="#fff"><path d="M1.500 4.500h9v7h-9zM.5 0v2.500h11V0M.5 16v-2.500h11V16M14.500 0v3M14.500 8v8" /><path d="M13.500 4h2v2.500h-2z" fill="#fff" stroke="none" /></svg>
        </TaskButton>
        <TaskButton $fill="#a65c25" $line="#ff7800"><ChromeIcon /></TaskButton>
        <TaskButton $fill="#4b4b4b" $line="#f472e4"><BraveLion width={20} height={24} /></TaskButton>
        {apps.map((Icon, i) => (
          <TaskButton key={i}><Icon /></TaskButton>
        ))}
        <RunningButton><CodeIcon /></RunningButton>
        <TaskButton><SlackRound /></TaskButton>
        <TaskButton><CameraIcon /></TaskButton>
        <RunningButton><EmulatorIcon /></RunningButton>
        <RunningButton><ChromeIcon /></RunningButton>
        <Tray>
          <TrayIcon><svg width="12" height="7" viewBox="0 0 12 7"><path d="M.6 6.300L6 1l5.400 5.300" fill="none" stroke="#fff" strokeWidth="1.300" /></svg></TrayIcon>
          <TrayIcon>
            <svg width="17" height="12" viewBox="0 0 17 12" fill="none" stroke="#fff"><path d="M5 3.500h9.500v7H4.500V7.500M15.500 5v4M1 2v3.500h4V2M2 0v2M4 0v2M3 5.500V10h1.500" /><path d="M7 5.500h5.500v3H7z" fill="#fff" stroke="none" /></svg>
          </TrayIcon>
          <TrayIcon>
            <svg width="17" height="16" viewBox="0 0 17 16"><path d="M16 8c0-.9-.8-1.500-1.800-1.500h-3.500L7.500 1H5.500l1.300 5.500H4L2.500 4.500H1L2 8l-1 3.500h1.500L4 9.500h2.800L5.500 15h2l3.200-5.500h3.500c1 0 1.800-.6 1.800-1.500z" fill="none" stroke="#fff" strokeWidth="1.100" /></svg>
          </TrayIcon>
          <TrayIcon>
            <svg width="17" height="14" viewBox="0 0 17 14" fill="none" stroke="#fff"><path d="M1 4.700h2.300L6.500 2v10L3.300 9.300H1z" /><path d="M9 5q1.200 2 0 4" /><path d="M11.500 3q2.500 4 0 8M14 1.500q3.300 5.500 0 11" stroke="#808683" /></svg>
          </TrayIcon>
          <Language>ENG</Language>
          <Clock>17:27<br />25-07-2020</Clock>
          <NoticeSlot>
            <svg width="18" height="17" viewBox="0 0 18 17"><path d="M1 1.500h15v11.500h-4.500l-3 3-3-3H1z" fill="none" stroke="#fff" strokeWidth="1.200" /></svg>
          </NoticeSlot>
          <DesktopEdge />
        </Tray>
      </Taskbar>
    </Screen>
  );
}
